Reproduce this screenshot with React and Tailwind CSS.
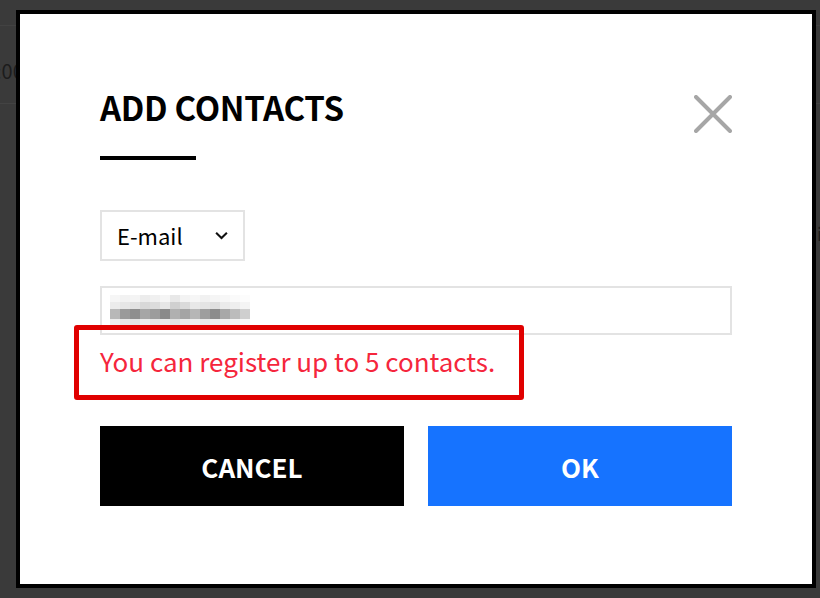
const blur = [
  ['#f6f6f6', '#f2f2f2', '#f4f4f4', '#ececec', '#f0f0f0', '#f5f5f5', '#e8e8e8', '#f3f3f3', '#f6f6f6', '#f1f1f1', '#f5f5f5', '#f7f7f7', '#fafafa', '#fcfcfc'],
  ['#ececec', '#e6e6e6', '#e2e2e2', '#d8d8d8', '#dcdcdc', '#e6e6e6', '#d0d0d0', '#dadada', '#e8e8e8', '#e4e4e4', '#e0e0e0', '#ebebeb', '#eeeeee', '#f4f4f4'],
  ['#b8b8b8', '#9a9a9a', '#8e8e8e', '#a6a6a6', '#9c9c9c', '#8a8a8a', '#b0b0b0', '#a4a4a4', '#b6b6b6', '#9e9e9e', '#8c8c8c', '#a8a8a8', '#bcbcbc', '#cfcfcf'],
  ['#eeeeee', '#e8e8e8', '#e4e4e4', '#ececec', '#e6e6e6', '#eaeaea', '#e2e2e2', '#ebebeb', '#eeeeee', '#e9e9e9', '#ededed', '#f0f0f0', '#f4f4f4', '#f8f8f8'],
]

function BlurredValue() {
  return (
    <div className="flex flex-col">
      {blur.map((row, i) => (
        <div key={i} className={i === 2 ? 'flex h-[10px]' : 'flex h-[7px]'}>
          {row.map((c, j) => (
            <div key={j} className="w-[10px]" style={{ backgroundColor: c }} />
          ))}
        </div>
      ))}
    </div>
  )
}

export default function App() {
  return (
    <div
      className="relative w-[820px] h-[598px] overflow-hidden bg-[#3a3a3a]"
      style={{ fontFamily: '"Noto Sans CJK KR", "Noto Sans", sans-serif' }}
    >
      {/* page behind the dialog */}
      <div className="absolute left-0 top-[25px] w-full h-px bg-[#424242]" />
      <div className="absolute left-0 top-[103px] w-full h-px bg-[#434343]" />
      <div className="absolute left-[-4px] top-[56px] text-[20px] text-[#1c1c1c]">:00</div>
      <div className="absolute right-[-2px] top-[220px] text-[18px] text-[#1c1c1c]">i</div>

      {/* dialog */}
      <div className="relative ml-[16px] mt-[10px] w-[800px] h-[578px] border-4 border-black bg-white px-20 pt-[73px]">
        <div className="flex items-start justify-between">
          <h2 className="text-[33px] leading-[40px] font-bold text-black tracking-[-0.3px]">ADD CONTACTS</h2>
          <button className="mt-[8px] w-[38px] h-[38px]">
            <svg viewBox="0 0 38 38" className="w-[38px] h-[38px]">
              <path d="M2 2 L36 36 M36 2 L2 36" stroke="#a6a6a6" strokeWidth="4" strokeLinecap="round" />
            </svg>
          </button>
        </div>
        <div className="mt-[23px] w-[96px] h-[4px] bg-black" />

        <div className="mt-[50px] w-[145px] h-[51px] border-2 border-[#e3e3e3] flex items-center pl-[15px] pr-[15px] justify-between">
          <span className="text-[22px] text-black">E-mail</span>
          <svg viewBox="0 0 14 9" className="w-[13px] h-[9px]">
            <path d="M1.2 1.5 L7 7.2 L12.8 1.5" fill="none" stroke="#111" strokeWidth="2.2" />
          </svg>
        </div>

        <div className="mt-[25px] h-[49px] border-2 border-[#e3e3e3] flex items-center pl-[8px]">
          <BlurredValue />
        </div>

        <p className="mt-[8px] text-[26px] leading-[36px] text-[#f5263c]">You can register up to 5 contacts.</p>

        <div className="mt-[47px] flex gap-6">
          <button className="w-[304px] h-[80px] bg-black text-white text-[26px] font-bold">CANCEL</button>
          <button className="w-[304px] h-[80px] bg-[#1673ff] text-white text-[26px] font-bold">OK</button>
        </div>
      </div>

      {/* annotation */}
      <div className="absolute left-[74px] top-[325px] w-[450px] h-[75px] border-[5px] border-[#e00000] rounded-[3px]" />
    </div>
  )
}
